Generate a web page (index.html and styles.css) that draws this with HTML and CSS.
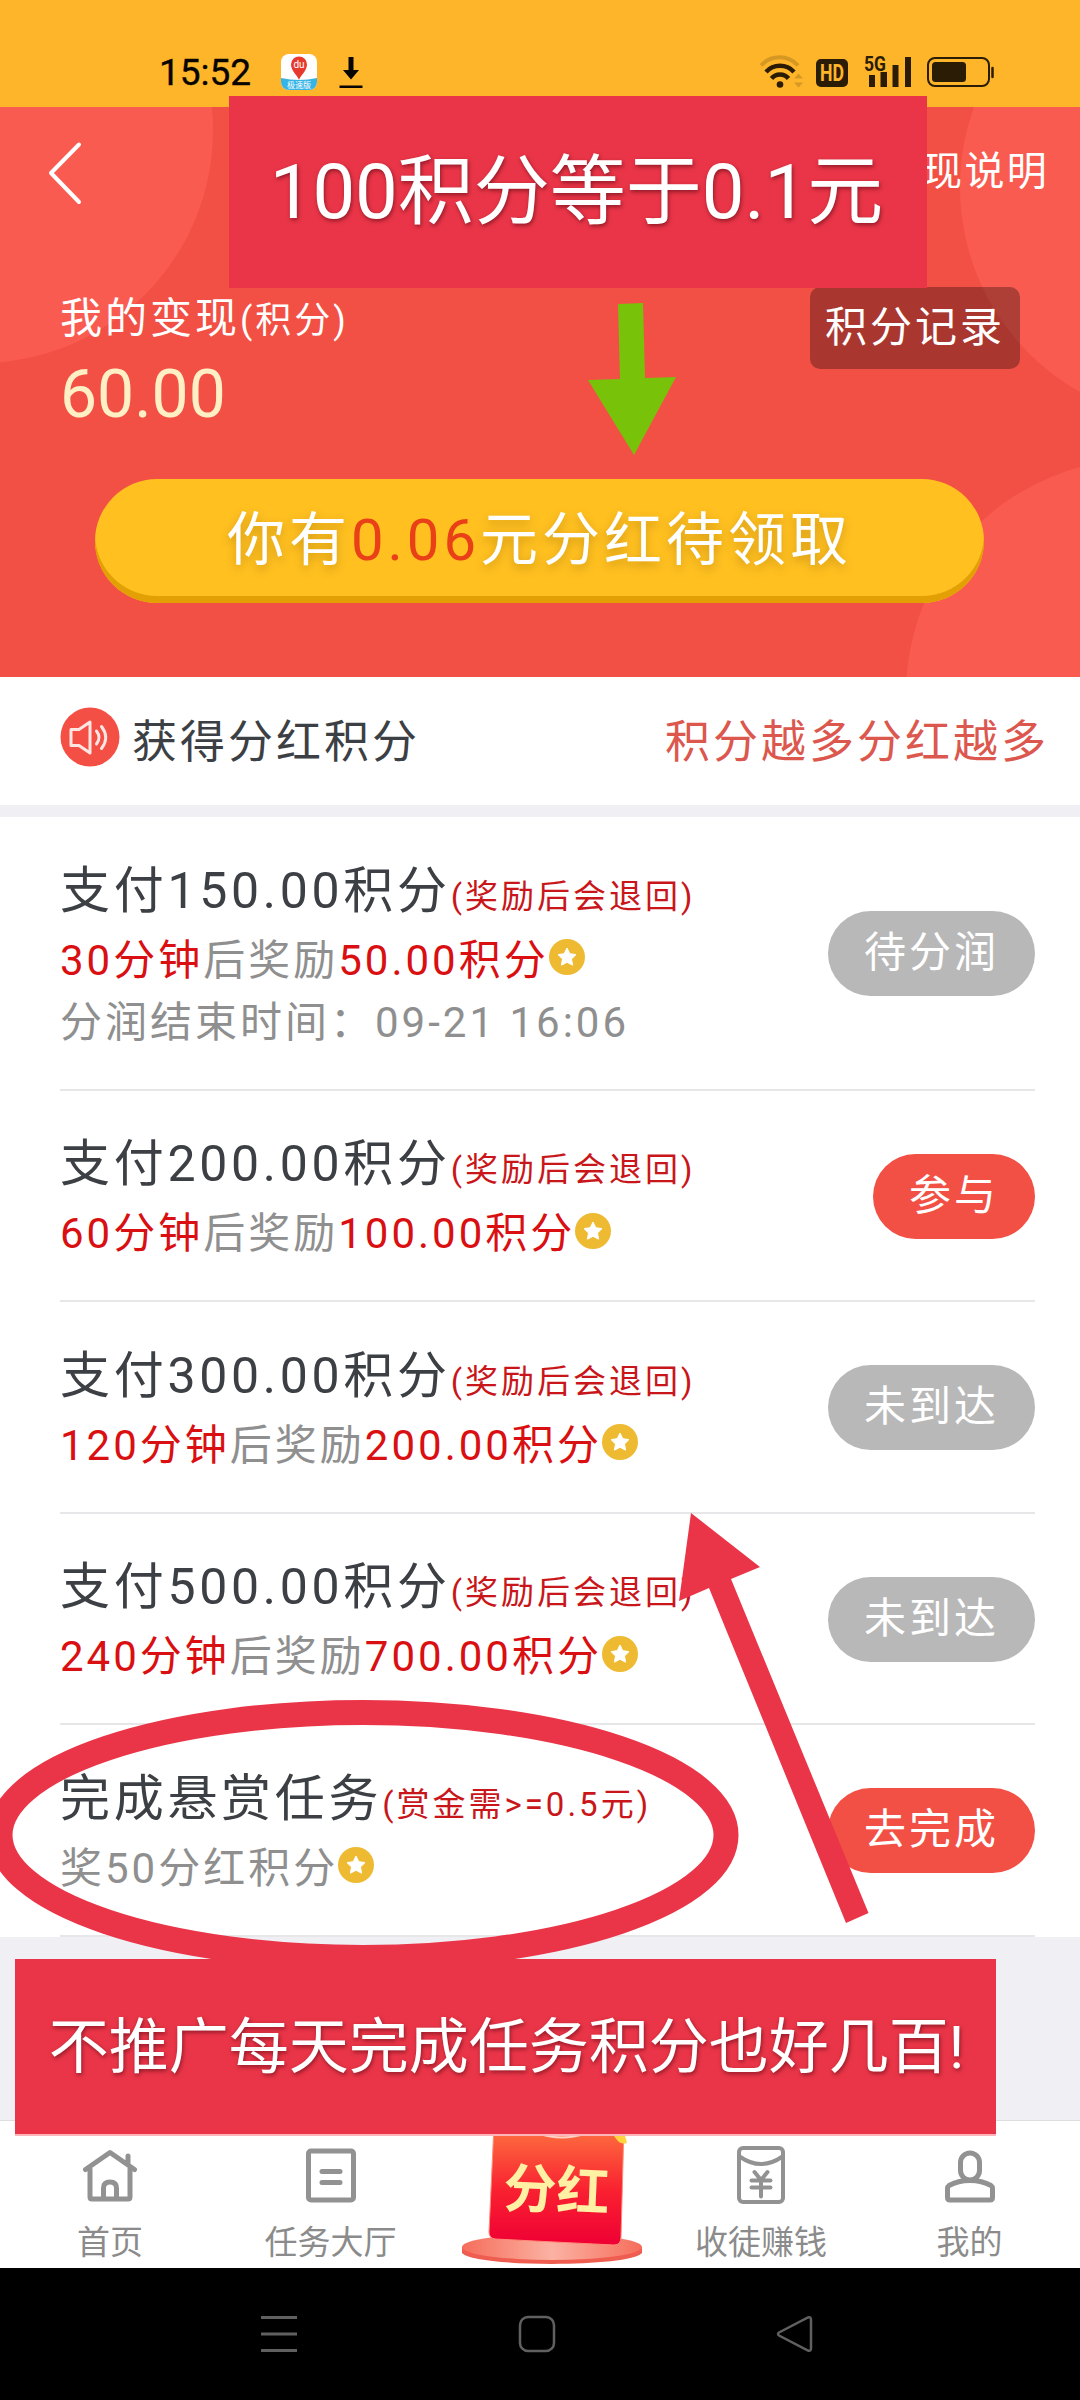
FILE: index.html
```html
<!DOCTYPE html>
<html lang="zh-CN">
<head>
<meta charset="utf-8">
<title>分红积分</title>
<link rel="stylesheet" href="styles.css">
</head>
<body>
<svg class="defs" width="0" height="0">
  <symbol id="coin" viewBox="0 0 36 36"><circle cx="18" cy="18" r="18" fill="#edba31"/><path d="M18 9l2.800 5.700 6.200 .9-4.500 4.400 1.100 6.200L18 23.300l-5.600 2.900 1.100-6.200L9 15.600l6.200-.9z" fill="#fff" stroke="#fff" stroke-width="1" stroke-linejoin="round"/></symbol>
</svg>
<div class="screen">
  <header class="status">
    <span class="clock">15:52</span>
    <svg class="app" width="36" height="36" viewBox="0 0 36 36">
      <defs><clipPath id="appClip"><rect width="36" height="36" rx="8"/></clipPath></defs>
      <g clip-path="url(#appClip)"><rect width="36" height="36" fill="#fff"/><path d="M0 24q18 4 36 0v12H0z" fill="#36b4e5"/></g>
      <path d="M18 26c-1-4-8-9-8-15.500a8 8 0 0 1 16 0C26 17 19 22 18 26z" fill="#e8392f"/>
      <text x="18" y="14" class="app-du">du</text><text x="18" y="34" class="app-name">极速版</text>
    </svg>
    <svg class="download" width="24" height="34" viewBox="0 0 24 34"><path d="M9.500 1h5v13H20l-8 9.500L4 14h5.500zM.5 29.500h23v2.500H.5z" fill="#080500"/></svg>
    <div class="status-right">
      <svg width="236" height="40" viewBox="0 0 236 40" fill="none" stroke="#2b1c06">
        <path d="M1 13.500a25 25 0 0 1 37 0" stroke="#d59923" stroke-width="4"/>
        <path d="M6 20a19 19 0 0 1 28 0M11.500 26.500a11 11 0 0 1 17 0" stroke-width="4.500"/>
        <circle cx="20" cy="32.500" r="3.300" fill="#2b1c06" stroke="none"/>
        <path d="M34 26.500l4.500-5 4.500 5zM34 30.500l4.500 5 4.500-5z" fill="#d59923" stroke="none"/>
        <rect x="56" y="7" width="32" height="28" rx="5" fill="#2b1c06" stroke="none"/>
        <text x="72" y="28.500" class="hd" textLength="24" lengthAdjust="spacingAndGlyphs">HD</text><text x="115" y="18.500" class="net" textLength="22" lengthAdjust="spacingAndGlyphs">5G</text>
        <path d="M109 23h6v12h-6zM120.500 20h6.500v15h-6.500zM132.500 13h6v22h-6zM145 5h6v30h-6z" fill="#2b1c06" stroke="none"/>
        <rect x="168" y="6" width="61" height="28" rx="7" stroke-width="2"/>
        <rect x="172" y="10" width="34" height="20" rx="3.500" fill="#2b1c06" stroke="none"/>
        <path d="M232.500 16v9" stroke-width="2.500" stroke-linecap="round"/>
      </svg>
    </div>
  </header>

  <section class="hero">
    <svg class="bubbles" width="1080" height="570" viewBox="0 107 1080 570" fill="#fa5b50"><circle cx="-20" cy="130" r="233"/><circle cx="1195" cy="187" r="235"/><circle cx="1141" cy="694" r="235"/></svg>
    <div class="nav">
      <svg width="34" height="64" viewBox="0 0 34 64"><path d="M31 3.500L3 32l28 29" fill="none" stroke="#fff" stroke-width="4" stroke-linecap="round" stroke-linejoin="round"/></svg>
      <span class="explain">变现说明</span>
    </div>
    <div class="balance">
      <div>
        <p class="balance-label">我的变现<small>(积分)</small></p>
        <p class="balance-value">60.00</p>
      </div>
      <a class="record">积分记录</a>
    </div>
    <div class="claim"><p>你有<em>0.06</em>元分红待领取</p></div>
  </section>

  <section class="notice">
    <svg width="60" height="60" viewBox="0 0 60 60"><circle cx="30" cy="30" r="29.500" fill="#f44f45"/><g fill="none" stroke="#ffe6e2" stroke-width="3" stroke-linejoin="round" stroke-linecap="round"><path d="M11 22.500h8L30 15v31L19 38.500h-8zM36.500 24q5 6.500 0 13M41.500 19.500q8.500 11 0 22"/></g></svg>
    <span class="notice-title">获得分红积分</span>
    <span class="notice-more">积分越多分红越多</span>
  </section>

  <main class="list">
    <article class="row tall">
      <div><h2>支付150.00积分<small>(奖励后会退回)</small></h2>
      <p><b>30分钟</b>后奖励<b>50.00积分</b><svg class="coin"><use href="#coin"/></svg></p>
      <p>分润结束时间：<span class="time">09-21 16:06</span></p></div>
      <a class="btn off">待分润</a>
    </article>
    <article class="row">
      <div><h2>支付200.00积分<small>(奖励后会退回)</small></h2>
      <p><b>60分钟</b>后奖励<b>100.00积分</b><svg class="coin"><use href="#coin"/></svg></p></div>
      <a class="btn">参与</a>
    </article>
    <article class="row">
      <div><h2>支付300.00积分<small>(奖励后会退回)</small></h2>
      <p><b>120分钟</b>后奖励<b>200.00积分</b><svg class="coin"><use href="#coin"/></svg></p></div>
      <a class="btn off">未到达</a>
    </article>
    <article class="row">
      <div><h2>支付500.00积分<small>(奖励后会退回)</small></h2>
      <p><b>240分钟</b>后奖励<b>700.00积分</b><svg class="coin"><use href="#coin"/></svg></p></div>
      <a class="btn off">未到达</a>
    </article>
    <article class="row">
      <div><h2>完成悬赏任务<small>(赏金需&gt;=0.5元)</small></h2>
      <p>奖50分红积分<svg class="coin"><use href="#coin"/></svg></p></div>
      <a class="btn">去完成</a>
    </article>
  </main>

  <nav class="tabs">
    <a><svg width="60" height="64" viewBox="0 0 60 64"><g fill="none" stroke="#929292" stroke-width="5" stroke-linejoin="round" stroke-linecap="round"><path d="M5.500 26.500L30 9.500l24.500 17M10 26v28q0 2 2 2h36q2 0 2-2V26M23.500 54V45q0-6 6.500-6t6.500 6v9M48 20v-7"/></g></svg>首页</a>
    <a><svg width="60" height="64" viewBox="0 0 60 64"><g fill="none" stroke="#929292" stroke-width="5" stroke-linecap="round"><rect x="7.500" y="8" width="45" height="49" rx="2.500"/><path d="M21 28.500h18M21 39.500h18"/></g></svg>任务大厅</a>
    <a class="bonus"><svg width="200" height="134" viewBox="452 2132 200 134">
      <defs><linearGradient id="env" x1="0" y1="0" x2="0" y2="1"><stop offset="0" stop-color="#fd7440"/><stop offset=".55" stop-color="#f92030"/><stop offset="1" stop-color="#ef0034"/></linearGradient>
      <linearGradient id="plate" x1="0" y1="0" x2="1" y2="0"><stop offset="0" stop-color="#f66d5b"/><stop offset=".5" stop-color="#fbb2a3"/><stop offset="1" stop-color="#f66d5b"/></linearGradient></defs>
      <path d="M462 2247v6c12 14.500 168 14.500 180 0v-6z" fill="#ef5d50"/>
      <ellipse cx="552" cy="2247" rx="90" ry="13" fill="url(#plate)"/>
      <path d="M494 2125h130l-3 112q0 8-7 8l-119-6q-6-1-6-7z" fill="url(#env)" stroke="#ff8c78" stroke-width="1"/>
      <ellipse cx="562" cy="2127" rx="30" ry="10.500" fill="#fc7a50" stroke="#ffd3c4" stroke-width="2"/>
      <path d="M611 2132l6 8q4 5 10 3l-3-11z" fill="#ffd43e"/>
      <text x="556.500" y="2209" class="bonus-text" transform="rotate(2.500 557 2190)">分红</text>
    </svg></a>
    <a><svg width="60" height="64" viewBox="0 0 60 64"><g fill="none" stroke="#929292" stroke-width="4" stroke-linecap="round"><rect x="8" y="5" width="44" height="54" rx="4"/><path d="M8.500 13.500q21.500 15 43 0M23.500 29l6.500 8 6.500-8M20.500 37.500h19M20.500 44.500h19M30 37.500v16"/></g></svg>收徒赚钱</a>
    <a><svg width="60" height="64" viewBox="0 0 60 64"><g fill="none" stroke="#929292" stroke-width="5" stroke-linejoin="round"><rect x="20.500" y="10" width="19" height="27" rx="9.500"/><path d="M30 37.500q12 0 21 5 1.500 1 1.500 3v9q0 2.500-2.500 2.500H10q-2.500 0-2.500-2.500v-9q0-2 1.500-3 9-5 21-5z"/></g></svg>我的</a>
  </nav>

  <footer class="system">
    <svg width="38" height="38" viewBox="0 0 38 38"><path d="M1 2.500h36M1 19h36M1 35.500h36" stroke="#606060" stroke-width="3"/></svg>
    <svg width="38" height="38" viewBox="0 0 38 38"><rect x="2" y="2" width="34" height="34" rx="8" fill="none" stroke="#606060" stroke-width="2.500"/></svg>
    <svg width="38" height="38" viewBox="0 0 38 38"><path d="M3 17.500L32 2.500q3-1 3 2v29q0 3-3 2L3 20.500q-2-1.500 0-3z" fill="none" stroke="#606060" stroke-width="2.500"/></svg>
  </footer>

  <svg class="marks" width="1080" height="2400" viewBox="0 0 1080 2400">
    <path d="M618 304l25-1 2 75 31-1-42 78-46-75 32-1z" fill="#78c20a"/>
    <ellipse cx="363" cy="1835" rx="363" ry="122.500" fill="none" stroke="#ea3548" stroke-width="25"/>
    <path d="M691 1513l69 54-29 12 137.500 334-22.500 10L709 1588l-30 13z" fill="#ea3548"/>
  </svg>
  <div class="banner banner-top">100积分等于0.1元</div>
  <div class="banner banner-bottom">不推广每天完成任务积分也好几百!</div>
</div>
</body>
</html>
```
FILE: styles.css
```css
* { box-sizing: border-box; }
body { margin: 0; font-family: Roboto, "Noto Sans CJK SC", sans-serif; }
h2, p { margin: 0; font-weight: 400; }
b, em { font-weight: 400; font-style: normal; }
svg { display: block; flex: none; }
.defs { position: absolute; }
.screen { position: relative; width: 1080px; height: 2400px; overflow: hidden; background: #efeff4; display: flex; flex-direction: column; }

.status { height: 107px; flex: none; background: #ffb52a; display: flex; align-items: flex-start; padding: 54px 84px 0 159px; }
.clock { width: 122px; font-size: 37px; line-height: 38px; color: #080500; letter-spacing: 0; -webkit-text-stroke: 0.4px #080500; }
.download { margin: 2px 0 0 22px; }
.status-right { margin: -2px 0 0 auto; }
.app-du { font-size: 10px; fill: #fff; text-anchor: middle; }
.app-name { font-size: 8px; fill: #fff; text-anchor: middle; }
.hd { font-size: 23px; font-weight: 700; fill: #ffb52a; stroke: none; text-anchor: middle; }
.net { font-size: 21px; font-weight: 700; fill: #2b1c06; stroke: none; text-anchor: middle; }

.hero { position: relative; height: 570px; flex: none; background: #f25045; color: #fff; }
.bubbles { position: absolute; left: 0; top: 0; }
.nav { position: relative; height: 132px; display: flex; align-items: center; justify-content: space-between; padding: 0 31px 0 48px; }
.explain { font-size: 40px; letter-spacing: 2.300px; margin-top: -10px; }
.balance { position: relative; display: flex; justify-content: space-between; align-items: flex-start; padding: 47px 60px 0 60px; height: 240px; }
.balance-label { font-size: 42px; line-height: 62px; letter-spacing: 3px; padding-top: 2px; }
.balance-label small { font-size: 36px; }
.balance-value { font-size: 66px; line-height: 86px; color: #ffefc5; }
.record { width: 210px; height: 82px; border-radius: 10px; background: rgba(0, 0, 0, .3); font-size: 42px; line-height: 82px; margin-top: 1px; letter-spacing: 3px; text-align: center; }
.claim { position: relative; width: 889px; height: 124px; margin-left: 95px; padding-bottom: 12px; border-radius: 62px; background: #ffc020; box-shadow: inset 0 -7px #e2a004; display: flex; align-items: center; justify-content: center; font-size: 58px; letter-spacing: 4px; text-shadow: 0 4px 10px rgba(120,80,0,.35); }
.claim em { color: #e94018; text-shadow: none; }

.notice { height: 128px; flex: none; background: #fff; display: flex; align-items: center; padding: 0 31px 8px 60px; font-size: 45px; letter-spacing: 3px; color: #3c4044; }
.notice-title { margin: 2px 0 0 12px; }
.notice-more { margin: 2px 0 0 auto; color: #dc574e; }

.list { margin-top: 12px; height: 1120px; flex: none; background: #fff; }
.row { height: 211.5px; margin: 0 45px 0 60px; border-bottom: 2px solid #e7e7e9; display: flex; justify-content: space-between; align-items: center; }
.row.tall { height: 273.5px; }
.row h2 { font-size: 50px; line-height: 64px; letter-spacing: 3.700px; color: #3c4044; padding-top: 7px; margin-bottom: 1px; white-space: nowrap; }
.row h2 small { font-size: 33px; letter-spacing: 3px; color: #c9161a; }
.row p { font-size: 42px; line-height: 62px; letter-spacing: 3px; color: #8f8f8f; white-space: nowrap; display: flex; align-items: center; }
.row b { color: #d90f12; }
.coin { width: 36px; height: 36px; margin: -7px 0 0 0; }
.btn { height: 85px; margin-top: 2px; border-radius: 43px; padding: 0 36px; background: #f25045; color: #fff; font-size: 42px; line-height: 84px; letter-spacing: 3px; }
.btn.off { background: #b8b8b8; }

.tabs { margin-top: 183px; height: 148px; flex: none; background: #fff; border-top: 1px solid #dedede; display: grid; grid-template-columns: 220px 221px 222px 196px 221px; }
.tabs a { display: flex; flex-direction: column; align-items: center; font-size: 33px; line-height: 48px; color: #8b8b8b; padding-top: 22px; gap: 12px; }
.tabs .bonus { padding-top: 11px; }
.bonus-text { font-size: 53px; font-weight: 700; fill: #fff0a4; text-anchor: middle; }

.system { height: 132px; flex: none; background: #000; display: flex; align-items: center; gap: 220px; padding-left: 260px; }

.marks { position: absolute; left: 0; top: 0; }
.banner { position: absolute; background: #ea3548; color: #fff; white-space: nowrap; text-align: center; text-shadow: 1px 2px 4px rgba(70,0,10,.55); }
.banner-top { left: 229px; top: 96px; width: 698px; height: 192px; padding-right: 3px; font-size: 76px; line-height: 193px; }
.banner-bottom { left: 15px; top: 1959px; width: 981px; height: 177px; padding-left: 2px; font-size: 60px; line-height: 178px; border-bottom: 2px solid #ffb4bc; }
```
